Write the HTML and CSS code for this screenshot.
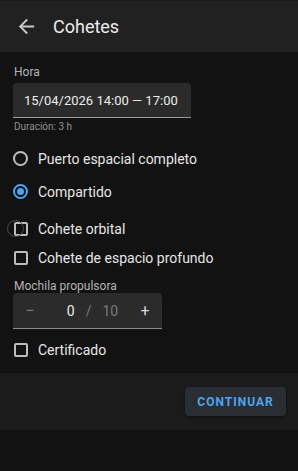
FILE: index.html
```html
<!DOCTYPE html>
<html>
<head>
    <title>Cohetes</title>
    <link rel="stylesheet" href="styles.css">
</head>
<body>
    <div class="app-bar">
        <svg class="back-icon" width="20" height="20" viewBox="0 0 24 24">
            <path d="M20 11H7.83l5.59-5.59L12 4l-8 8 8 8 1.41-1.41L7.83 13H20v-2z" fill="#c8c8c8"/>
        </svg>
        <div class="title">Cohetes</div>
    </div>

    <div class="content">
        <div class="field-label">Hora</div>
        <div class="text-field">15/04/2026 14:00 — 17:00</div>
        <div class="helper">Duración: 3 h</div>

        <div class="option radio-row">
            <span class="radio"></span>
            <span class="option-text">Puerto espacial completo</span>
        </div>
        <div class="option radio-row">
            <span class="radio checked"></span>
            <span class="option-text">Compartido</span>
        </div>

        <div class="option check-row first-check">
            <span class="ripple"></span>
            <span class="checkbox"></span>
            <span class="option-text">Cohete orbital</span>
        </div>
        <div class="option check-row">
            <span class="checkbox"></span>
            <span class="option-text">Cohete de espacio profundo</span>
        </div>

        <div class="field-label stepper-label">Mochila propulsora</div>
        <div class="stepper">
            <span class="step-btn dim">−</span>
            <span class="step-value">0</span>
            <span class="step-sep">/</span>
            <span class="step-max">10</span>
            <span class="step-btn">+</span>
        </div>

        <div class="option check-row last-check">
            <span class="checkbox"></span>
            <span class="option-text">Certificado</span>
        </div>
    </div>

    <div class="footer">
        <button class="continue-button">CONTINUAR</button>
    </div>
</body>
</html>
```

FILE: styles.css
```css
body {
    margin: 0;
    background-color: #121212;
    font-family: Roboto, "Noto Sans", sans-serif;
    color: #e6e6e6;
    width: 298px;
    height: 471px;
    overflow: hidden;
}
.app-bar {
    display: flex;
    align-items: center;
    height: 52px;
    background-color: #212121;
    border-top: 1px solid #1a1a1a;
    box-sizing: border-box;
    padding-left: 15px;
}
.back-icon {
    width: 23px;
    height: 23px;
}
.title {
    margin-left: 15px;
    font-size: 18px;
    color: #ececec;
}
.content {
    padding: 13px 0 0 13px;
    height: 308px;
}
.field-label {
    font-size: 12px;
    color: #b4b4b4;
    margin-left: 1px;
    line-height: 14px;
}
.text-field {
    margin-top: 4px;
    width: 178px;
    height: 35px;
    box-sizing: border-box;
    background-color: #2b2b2b;
    border-radius: 4px 4px 0 0;
    border-bottom: 1px solid #9a9a9a;
    padding: 0 0 0 11px;
    font-size: 13px;
    line-height: 35px;
    color: #ececec;
}
.helper {
    font-size: 10px;
    color: #909090;
    margin: 3px 0 0 1px;
    line-height: 12px;
}
.option {
    display: flex;
    align-items: center;
    position: relative;
    font-size: 14px;
    color: #e6e6e6;
}
.radio-row {
    height: 33px;
}
.helper + .radio-row {
    margin-top: 9px;
}
.radio {
    width: 15px;
    height: 15px;
    box-sizing: border-box;
    border: 2px solid #bdbdbd;
    border-radius: 50%;
    margin-right: 10px;
    position: relative;
}
.radio.checked {
    border-color: #4ea4ee;
}
.radio.checked::after {
    content: "";
    position: absolute;
    left: 2px;
    top: 2px;
    width: 7px;
    height: 7px;
    border-radius: 50%;
    background-color: #4ea4ee;
}
.check-row {
    height: 29px;
}
.first-check {
    margin-top: 6px;
}
.checkbox {
    width: 14px;
    height: 14px;
    box-sizing: border-box;
    border: 2px solid #bdbdbd;
    border-radius: 2px;
    margin: 0 10px 0 1px;
}
.ripple {
    position: absolute;
    left: -6px;
    top: 6px;
    width: 17px;
    height: 17px;
    box-sizing: border-box;
    border: 1.5px solid #4a4a4a;
    border-radius: 50%;
}
.stepper-label {
    margin-top: 7px;
}
.stepper {
    margin-top: 0;
    display: flex;
    align-items: center;
    width: 149px;
    height: 36px;
    box-sizing: border-box;
    background-color: #2b2b2b;
    border-radius: 4px 4px 0 0;
    border-bottom: 1px solid #8a8a8a;
    font-size: 14px;
}
.step-btn {
    width: 38px;
    text-align: center;
    color: #d6d6d6;
    font-size: 16px;
}
.step-btn.dim {
    color: #7a7a7a;
}
.step-value {
    margin-left: 20px;
    color: #ececec;
}
.step-sep {
    margin-left: 11px;
    color: #7a7a7a;
}
.step-max {
    margin-left: 11px;
    margin-right: 10px;
    color: #7a7a7a;
}
.last-check {
    margin-top: 6px;
}
.footer {
    display: flex;
    justify-content: flex-end;
    align-items: center;
    height: 57px;
    background-color: #1b1b1b;
    padding-right: 12px;
}
.continue-button {
    width: 101px;
    height: 29px;
    background-color: #2a2e34;
    border: none;
    border-radius: 4px;
    color: #4ea4ee;
    font-family: Roboto, sans-serif;
    font-weight: bold;
    font-size: 12px;
    letter-spacing: 1px;
    box-shadow: 0 1px 3px rgba(0, 0, 0, 0.5);
}
```
